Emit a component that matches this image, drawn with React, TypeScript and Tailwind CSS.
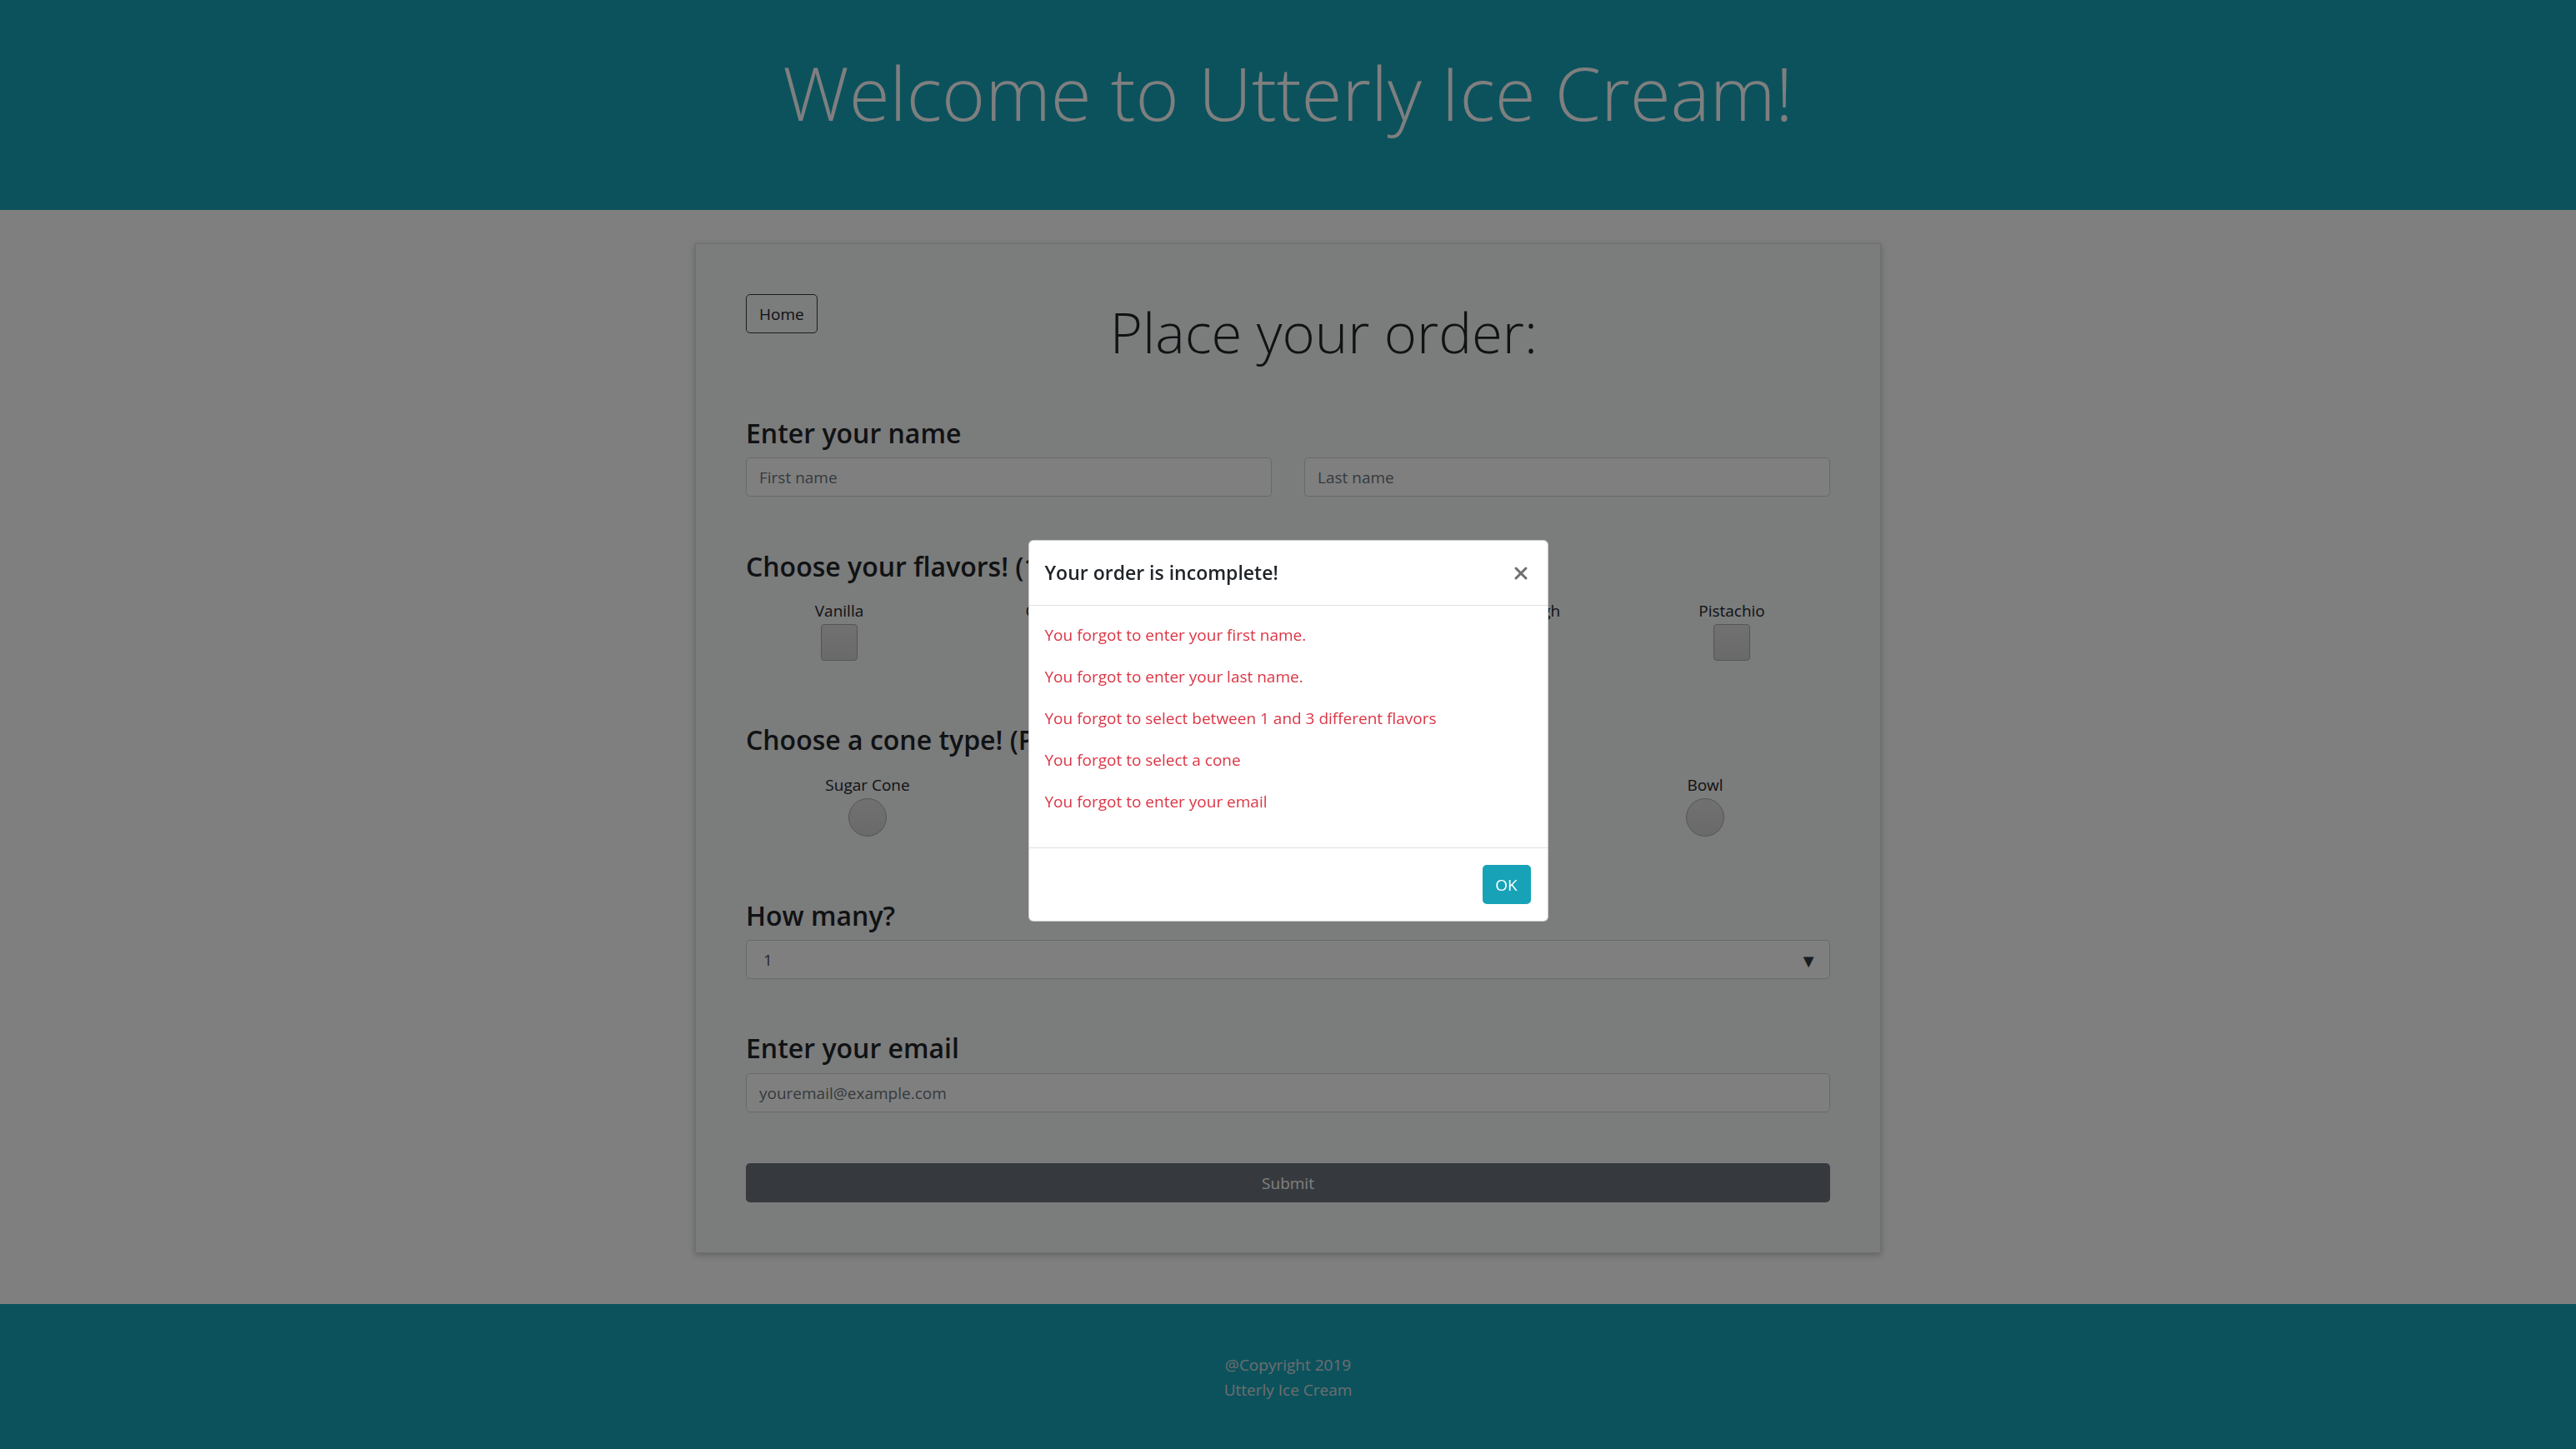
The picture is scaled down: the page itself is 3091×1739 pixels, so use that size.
import { X } from 'lucide-react';

const flavors = ['Vanilla', 'Chocolate', 'Strawberry', 'Cookie Dough', 'Pistachio'];
const cones = ['Sugar Cone', 'Waffle Cone', 'Cake Cone', 'Bowl'];
const errors = [
  'You forgot to enter your first name.',
  'You forgot to enter your last name.',
  'You forgot to select between 1 and 3 different flavors',
  'You forgot to select a cone',
  'You forgot to enter your email',
];

function SectionTitle({ children }: { children: React.ReactNode }) {
  return <h4 className="text-[32px] leading-[36px] font-semibold text-[#212529] whitespace-nowrap">{children}</h4>;
}

export default function App() {
  return (
    <div className="relative font-['Open_Sans',sans-serif] text-[19px] leading-[30px] text-[#212529]">
      <header className="h-[252px] bg-[#19a4ba] flex items-center justify-center pb-[30px]">
        <h1 className="text-[89px] leading-[108px] font-light text-white">Welcome to Utterly Ice Cream!</h1>
      </header>

      <main className="bg-white pt-[40px] pb-[61px] flex justify-center">
        <div className="w-[1423px] bg-[#f7f8f8] border border-[#dcdede] shadow-[0_2px_8px_rgba(0,0,0,0.25)] p-[60px]">
          <div className="flex items-start">
            <button className="h-[47px] px-[15px] border border-[#343a40] rounded-[5px] text-[#212529]">
              Home
            </button>
            <h2 className="flex-1 text-center text-[67px] leading-[84px] font-light mt-[3px]">Place your order:</h2>
          </div>

          <div className="mt-[62px]">
            <SectionTitle>Enter your name</SectionTitle>
            <div className="mt-[11px] flex gap-[39px]">
              <input
                placeholder="First name"
                className="flex-1 h-[47px] px-[15px] bg-white border border-[#ced4da] rounded-[5px] placeholder:text-[#6c757d]"
              />
              <input
                placeholder="Last name"
                className="flex-1 h-[47px] px-[15px] bg-white border border-[#ced4da] rounded-[5px] placeholder:text-[#6c757d]"
              />
            </div>
          </div>

          <div className="mt-[66px]">
            <SectionTitle>Choose your flavors! (1 to 3)</SectionTitle>
            <div className="mt-[20px] flex justify-between pl-[52px] pr-[58px]">
              {flavors.map((f) => (
                <label key={f} className="w-[120px] flex flex-col items-center">
                  <span className="whitespace-nowrap">{f}</span>
                  <span className="mt-[1px] w-[44px] h-[44px] rounded-[4px] border border-[#a9a9a9] bg-linear-to-b from-[#e2e2e2] to-[#d4d4d4]" />
                </label>
              ))}
            </div>
          </div>

          <div className="mt-[77px]">
            <SectionTitle>Choose a cone type! (Pick one)</SectionTitle>
            <div className="mt-[21px] flex justify-between pl-[86px] pr-[90px]">
              {cones.map((c) => (
                <label key={c} className="w-[120px] flex flex-col items-center">
                  <span className="whitespace-nowrap">{c}</span>
                  <span className="mt-[1px] w-[46px] h-[46px] rounded-full border border-[#a9a9a9] bg-linear-to-b from-[#e2e2e2] to-[#d4d4d4]" />
                </label>
              ))}
            </div>
          </div>

          <div className="mt-[77px]">
            <SectionTitle>How many?</SectionTitle>
            <div className="mt-[11px] h-[47px] pl-[20px] pr-[14px] bg-white border border-[#ced4da] rounded-[5px] flex items-center justify-between text-[#495057]">
              <span>1</span>
              <span className="text-[22px] text-[#343a40]">▼</span>
            </div>
          </div>

          <div className="mt-[65px]">
            <SectionTitle>Enter your email</SectionTitle>
            <input
              placeholder="youremail@example.com"
              className="mt-[12px] w-full h-[47px] px-[15px] bg-white border border-[#ced4da] rounded-[5px] placeholder:text-[#6c757d]"
            />
          </div>

          <button className="mt-[61px] w-full h-[47px] rounded-[5px] bg-[#6c757d] text-white">Submit</button>
        </div>
      </main>

      <footer className="h-[176px] bg-[#19a4ba] flex flex-col items-center justify-center text-[#dadddd]">
        <span>@Copyright 2019</span>
        <span>Utterly Ice Cream</span>
      </footer>

      <div className="fixed inset-0 bg-black/50 z-40" />

      <div className="fixed inset-0 z-50 flex justify-center pt-[648px]">
        <div className="w-[624px] h-fit bg-white rounded-[6px] border border-black/20">
          <div className="h-[78px] pl-[19px] pr-[20px] flex items-center justify-between border-b border-[#dee2e6]">
            <h5 className="text-[23px] leading-[37px] font-semibold text-[#212529]">Your order is incomplete!</h5>
            <button className="text-[#6f6f6f]">
              <X size={24} strokeWidth={3} />
            </button>
          </div>
          <div className="py-[20px] px-[19px]">
            {errors.map((e) => (
              <p key={e} className="text-[#dc3545] mb-[20px]">
                {e}
              </p>
            ))}
          </div>
          <div className="h-[88px] px-[20px] flex items-center justify-end border-t border-[#dee2e6]">
            <button className="h-[47px] w-[58px] rounded-[5px] bg-[#17a2b8] text-white">OK</button>
          </div>
        </div>
      </div>
    </div>
  );
}
